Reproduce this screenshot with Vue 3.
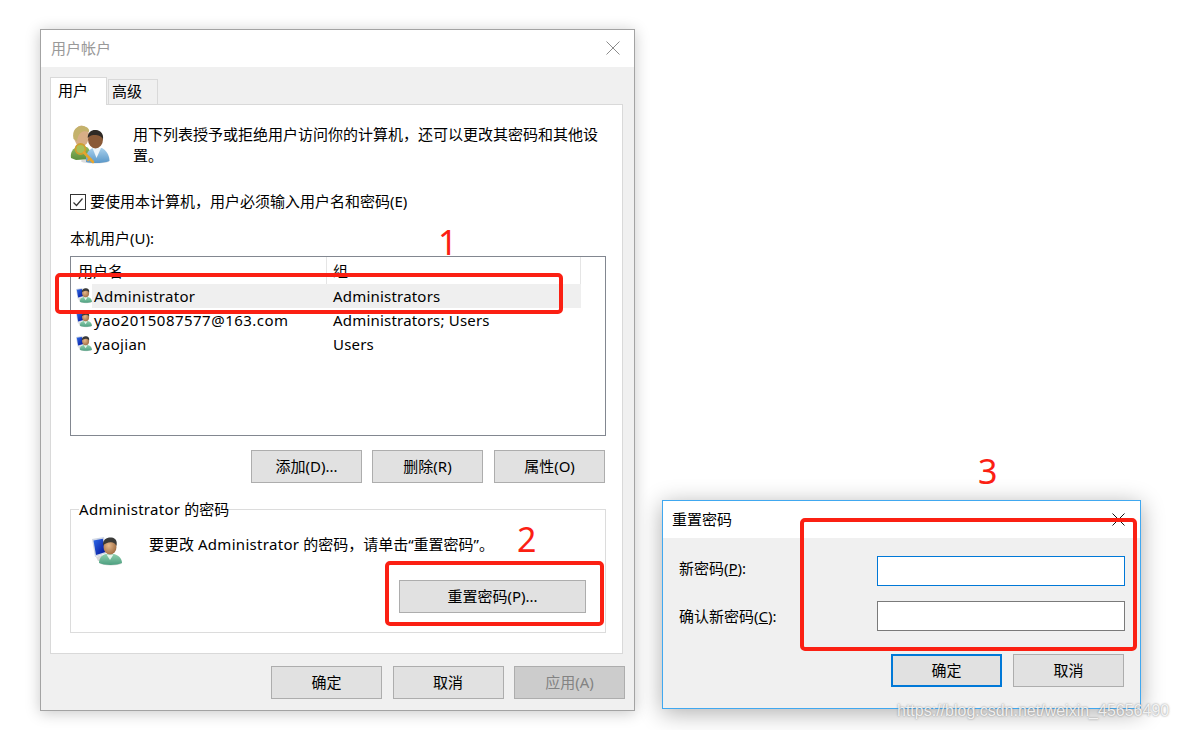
<script setup>
const users = [
  { name: 'Administrator', group: 'Administrators', selected: true, cls: 'sp-a' },
  { name: 'yao2015087577@163.com', group: 'Administrators; Users', selected: false, cls: 'sp-b' },
  { name: 'yaojian', group: 'Users', selected: false, cls: 'sp-a' }
]
const actions = ['添加(D)...', '删除(R)', '属性(O)']
</script>

<template>
  <div class="page">
    <svg class="defs" width="0" height="0" aria-hidden="true">
      <defs>
        <linearGradient id="screen" x1="0" y1="0" x2="1" y2="1">
          <stop offset="0" stop-color="#2f6be8" />
          <stop offset="1" stop-color="#000f96" />
        </linearGradient>
        <linearGradient id="teal" x1="0" y1="0" x2="0" y2="1">
          <stop offset="0" stop-color="#8fd0ae" />
          <stop offset="1" stop-color="#4d9f80" />
        </linearGradient>
        <radialGradient id="skin" cx=".4" cy=".4" r=".8">
          <stop offset="0" stop-color="#e6b98c" />
          <stop offset="1" stop-color="#8f5a30" />
        </radialGradient>
        <linearGradient id="blueShirt" x1="0" y1="0" x2="0" y2="1">
          <stop offset="0" stop-color="#a8d0ec" />
          <stop offset="1" stop-color="#5a97c8" />
        </linearGradient>
        <linearGradient id="greenShirt" x1="0" y1="0" x2="0" y2="1">
          <stop offset="0" stop-color="#8fb860" />
          <stop offset="1" stop-color="#5c8f3c" />
        </linearGradient>
        <symbol id="user-pc" viewBox="0 0 30 30">
          <ellipse cx="19" cy="26" rx="11" ry="2.500" fill="#c9c9c9" opacity=".7" />
          <path d="M0 2 L12 0 L15 16 L3 20 Z" fill="#cfd6e4" />
          <path d="M1.500 3.500 L10.800 1.800 L13.500 15 L4 18 Z" fill="url(#screen)" />
          <path d="M4 20 L10 18 L12 24 L6 24 Z" fill="#d8d8d8" />
          <path d="M7 26 C7 20 11 17.500 14 17 L22 17 C26 18 30 21 30 26 C25 28.500 12 28.500 7 26 Z" fill="url(#teal)" />
          <path d="M14.500 17.500 L18 23 L21.500 17.500 Z" fill="#e6f5ec" />
          <ellipse cx="18" cy="10" rx="6.500" ry="7.500" fill="url(#skin)" />
          <path d="M11 8.500 C10.500 2 15.500 0 19.500 .500 C24 1 25.500 4.500 24.500 9 C23.500 6.500 21 5 18.500 5.300 C16 5.500 12.500 6.500 11 8.500 Z" fill="#3a3a38" />
        </symbol>
      </defs>
    </svg>

    <section class="window main-window">
      <header class="titlebar main-title">
        <span>用户帐户</span>
        <svg class="close" width="14" height="14" viewBox="0 0 14 14"><path d="M.5.5l13 13M13.500.5l-13 13" stroke="#8c8c8c" fill="none" /></svg>
      </header>
      <div class="main-body">
        <div class="tabs">
          <div class="tab active">用户</div>
          <div class="tab">高级</div>
        </div>
        <div class="panel">
          <div class="intro">
            <svg class="keys-icon" width="40" height="40" viewBox="0 0 40 40">
              <ellipse cx="25" cy="36" rx="14" ry="2.500" fill="#bbb" opacity=".5" />
              <path d="M1 33 C0 27 3 23 8 22 L17 22 C20 24 21 29 21 34 L6 35 Z" fill="url(#greenShirt)" />
              <ellipse cx="11.500" cy="11" rx="7.500" ry="10.500" fill="#d7ae86" />
              <path d="M3.500 14 C1.500 4 8 .500 12.500 1 C17 1.500 20 4 19 7 C14 5 8.500 6 7 16 Z" fill="#c4b26c" />
              <path d="M16 37 C15.500 29 18 25 23 23 L32 23 C36 25 39.500 30 39.500 36 C33 38.500 22 38.500 16 37 Z" fill="url(#blueShirt)" />
              <path d="M22.500 23 L26.500 33 L31 23 Z" fill="#eef5fa" />
              <ellipse cx="25.500" cy="14.500" rx="7.500" ry="9" fill="#8a5a38" />
              <path d="M17.800 13 C17.500 7 22 4.500 26 5 C31 5.500 33.800 9 33 14.500 C31.500 11 28 10 25 10 C22.500 10 19.500 10.500 17.800 13 Z" fill="#2f2a26" />
              <circle cx="10.500" cy="24" r="5" fill="#a9bf58" stroke="#d09f2e" stroke-width="1.800" />
              <path d="M14 27.500 L23 37" stroke="#e5a52e" stroke-width="2.600" stroke-linecap="round" />
              <path d="M19.500 33.500 L17.500 36" stroke="#e5a52e" stroke-width="1.800" />
            </svg>
            <p>用下列表授予或拒绝用户访问你的计算机，还可以更改其密码和其他设置。</p>
          </div>

          <label class="check-row">
            <span class="checkbox">
              <svg width="14" height="14" viewBox="0 0 14 14"><path d="M2.500 7.500 L5.500 10.500 L11.500 3.500" stroke="#333" stroke-width="1.200" fill="none" /></svg>
            </span>
            <span class="check-text">要使用本计算机，用户必须输入用户名和密码(E)</span>
          </label>

          <div class="list-label">本机用户(U):</div>
          <div class="list">
            <div class="list-head">
              <div class="head-cell first">用户名</div>
              <div class="head-cell">组</div>
            </div>
            <div v-for="u in users" :key="u.name" class="list-row">
              <div class="row-icon"><svg width="16" height="16"><use href="#user-pc" /></svg></div>
              <div class="row-name" :class="[u.cls, { selected: u.selected }]">{{ u.name }}</div>
              <div class="row-group" :class="{ selected: u.selected }">{{ u.group }}</div>
            </div>
          </div>

          <div class="list-actions">
            <button v-for="a in actions" :key="a" class="btn">{{ a }}</button>
          </div>

          <div class="group">
            <div class="legend"><span class="sp-a">Administrator</span> 的密码</div>
            <div class="group-row">
              <svg class="group-icon" width="30" height="30"><use href="#user-pc" /></svg>
              <p>要更改 <span class="sp-a">Administrator</span> 的密码，请单击“重置密码”。</p>
            </div>
            <div class="group-action">
              <button class="btn reset">重置密码(P)...</button>
            </div>
          </div>
        </div>
        <div class="footer">
          <button class="btn">确定</button>
          <button class="btn">取消</button>
          <button class="btn disabled">应用(A)</button>
        </div>
      </div>
    </section>

    <section class="window reset-window">
      <header class="titlebar reset-title">
        <span>重置密码</span>
        <svg class="close" width="13" height="13" viewBox="0 0 13 13"><path d="M.5.5l12 12M12.500.5l-12 12" stroke="#111" fill="none" /></svg>
      </header>
      <div class="reset-body">
        <div class="field">
          <label class="first-label">新密码(<u>P</u>):</label>
          <input class="input focused" type="text" />
        </div>
        <div class="field second">
          <label>确认新密码(<u>C</u>):</label>
          <input class="input" type="text" />
        </div>
        <div class="reset-actions">
          <button class="btn primary">确定</button>
          <button class="btn">取消</button>
        </div>
      </div>
    </section>

    <div class="mark mark-1"></div>
    <div class="mark mark-2"></div>
    <div class="mark mark-3"></div>
    <div class="num num-1">1</div>
    <div class="num num-2">2</div>
    <div class="num num-3">3</div>
    <div class="watermark">https://blog.csdn.net/weixin_45656490</div>
  </div>
</template>

<style scoped>
.page {
  position: relative;
  width: 1179px;
  height: 730px;
  background: #fff;
  overflow: hidden;
  font-family: "Noto Sans", "Noto Sans CJK SC", sans-serif;
  font-size: 15px;
  color: #000;
}
.defs { position: absolute; }
p { margin: 0; }
.sp-a { letter-spacing: .3px; }
.sp-b { letter-spacing: .48px; }
.window {
  position: absolute;
  box-sizing: border-box;
  display: flex;
  flex-direction: column;
  background: #f0f0f0;
}
.main-window {
  left: 40px;
  top: 29px;
  width: 595px;
  height: 682px;
  border: 1px solid #a3a3a3;
  box-shadow: 0 2px 14px rgba(0, 0, 0, .22);
}
.reset-window {
  left: 662px;
  top: 500px;
  width: 479px;
  height: 209px;
  border: 1px solid #40a8f0;
  box-shadow: 0 4px 22px rgba(0, 0, 0, .32);
}
.titlebar {
  display: flex;
  align-items: center;
  justify-content: space-between;
  background: #fff;
  line-height: 20px;
}
.titlebar span { margin-top: -2px; }
.main-title {
  height: 37px;
  padding: 0 14px 0 10px;
  color: #999;
}
.reset-title {
  height: 37px;
  padding: 0 15px 0 9px;
}
.main-title .close { margin-top: -2px; }
.main-body {
  flex: 1;
  padding: 10px 11px 0 9px;
}
.tabs {
  display: flex;
  align-items: flex-end;
  height: 27px;
}
.tab {
  box-sizing: border-box;
  height: 25px;
  width: 50px;
  margin-left: 1px;
  border: 1px solid #d9d9d9;
  border-bottom: 0;
  padding-left: 3px;
  line-height: 22px;
}
.tab.active {
  position: relative;
  z-index: 1;
  width: 57px;
  height: 28px;
  margin-left: 0;
  margin-bottom: -1px;
  padding-left: 7px;
  background: #fff;
  line-height: 24px;
}
.panel {
  box-sizing: border-box;
  height: 550px;
  padding: 19px 16px 0 19px;
  background: #fff;
  border: 1px solid #d9d9d9;
}
.intro {
  display: flex;
  line-height: 21px;
}
.keys-icon {
  flex: none;
  margin: 1px 23px 0 0;
  filter: blur(.5px);
}
.check-row {
  display: flex;
  align-items: center;
  gap: 4px;
  height: 20px;
  margin-top: 26px;
}
.check-text { margin-top: -4px; }
.checkbox {
  box-sizing: border-box;
  width: 16px;
  height: 16px;
  border: 1px solid #333;
  display: flex;
  align-items: center;
  justify-content: center;
}
.list-label {
  height: 20px;
  line-height: 18px;
  margin-top: 17px;
}
.list {
  box-sizing: border-box;
  height: 180px;
  margin-top: 7px;
  border: 1px solid #828790;
}
.list-head {
  display: grid;
  grid-template-columns: 256px 254px;
  height: 27px;
}
.head-cell {
  border-right: 1px solid #e5e5e5;
  padding: 4px 0 0 6px;
  line-height: 20px;
}
.head-cell.first { padding-left: 7px; }
.list-row {
  display: grid;
  grid-template-columns: 21px 234px 255px;
  height: 24px;
  line-height: 24px;
}
.row-icon {
  display: flex;
  align-items: center;
  padding-left: 5px;
}
.row-icon svg { filter: blur(.25px); }
.row-name { padding-left: 2px; }
.row-group { padding-left: 7px; letter-spacing: .2px; }
.selected { background: #efefef; }
.list-actions {
  display: flex;
  justify-content: flex-end;
  gap: 10px;
  margin-top: 14px;
  margin-right: 1px;
}
.list-actions .btn:last-child { margin-left: 1px; }
.btn {
  box-sizing: border-box;
  width: 111px;
  height: 33px;
  padding: 0 0 2px;
  background: #e1e1e1;
  border: 1px solid #adadad;
  border-radius: 0;
  font-family: inherit;
  font-size: 15px;
  color: #000;
}
.group {
  box-sizing: border-box;
  height: 124px;
  margin-top: 26px;
  border: 1px solid #dcdcdc;
  padding-left: 8px;
}
.legend {
  display: inline-block;
  height: 20px;
  margin-top: -11px;
  background: #fff;
  line-height: 20px;
  vertical-align: top;
}
.group-row {
  display: flex;
  align-items: flex-start;
  margin: 7px 0 0 13px;
  line-height: 20px;
}
.group-icon {
  flex: none;
  margin: 0 27px 0 0;
  filter: blur(.3px);
}
.group-row p { margin-top: -3px; }
.group-action {
  display: flex;
  justify-content: flex-end;
  margin-top: 13px;
  padding-right: 19px;
}
.btn.reset { width: 187px; }
.footer {
  display: flex;
  justify-content: flex-end;
  gap: 10.5px;
  margin-top: 12px;
  margin-right: -2px;
}
.btn.disabled {
  background: #ccc;
  color: #838383;
}
.reset-body {
  flex: 1;
  padding: 18px 15px 0 16px;
}
.field {
  display: flex;
  align-items: center;
  justify-content: space-between;
  height: 30px;
}
.field.second { margin-top: 15px; }
.field label { line-height: 20px; }
.field .first-label { margin-top: -6px; }
.input {
  box-sizing: border-box;
  width: 248px;
  height: 30px;
  margin: 0;
  padding: 0;
  background: #fff;
  border: 1px solid #7a7a7a;
  border-radius: 0;
  outline: none;
}
.input.focused { border-color: #0078d7; }
.reset-actions {
  display: flex;
  justify-content: flex-end;
  gap: 11px;
  margin-top: 23px;
  padding-right: 1px;
}
.btn.primary { border: 2px solid #0078d7; }
.mark {
  position: absolute;
  box-sizing: border-box;
  border: 4px solid #fb2013;
  border-radius: 5px;
}
.mark-1 { left: 55px; top: 273px; width: 508px; height: 41px; }
.mark-2 { left: 385px; top: 561px; width: 219px; height: 65px; }
.mark-3 { left: 800px; top: 518px; width: 337px; height: 133px; }
.num {
  position: absolute;
  color: #fb2013;
  font-family: "Noto Sans", sans-serif;
  font-size: 34px;
  line-height: 40px;
}
.num-1 { left: 438px; top: 222px; }
.num-2 { left: 517px; top: 519px; }
.num-3 { left: 978px; top: 451px; }
.watermark {
  position: absolute;
  left: 897px;
  top: 701px;
  font-family: "Liberation Sans", sans-serif;
  font-size: 16px;
  line-height: 20px;
  white-space: nowrap;
  color: rgba(255, 255, 255, .85);
  text-shadow: 0 0 2px rgba(90, 90, 90, .75);
}
</style>
